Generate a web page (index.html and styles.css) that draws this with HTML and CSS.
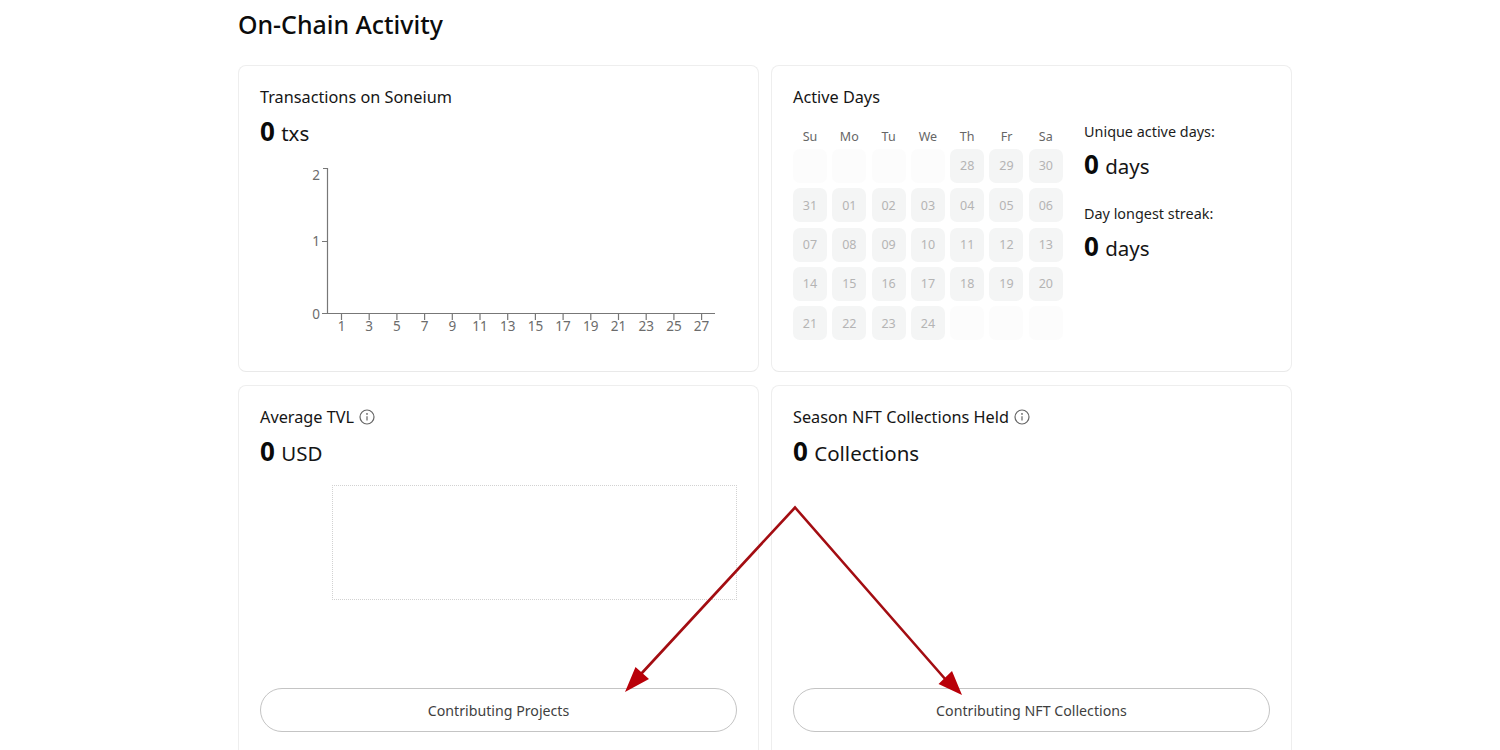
FILE: index.html
```html
<!DOCTYPE html>
<html lang="en">
<head>
<meta charset="utf-8">
<title>On-Chain Activity</title>
<link rel="stylesheet" href="styles.css">
</head>
<body>
<main class="page">
  <h1 class="heading">On-Chain Activity</h1>
  <div class="grid">
    <section class="card">
      <h2 class="card-title">Transactions on Soneium</h2>
      <p class="metric"><b>0</b> txs</p>
      <svg class="bar-chart" width="477" height="180" viewBox="260 160 477 180" aria-label="Transactions chart">
        <g class="axis">
          <path d="M323 168.5H327.5V313.5H715M322 241.5H327.5M322 313.5H327.5"/>
          <path d="M341.5 314V320M369.2 314V320M396.9 314V320M424.6 314V320M452.3 314V320M480 314V320M507.7 314V320M535.4 314V320M563.1 314V320M590.8 314V320M618.5 314V320M646.2 314V320M673.9 314V320M701.6 314V320"/>
        </g>
        <g class="y-labels">
          <text x="320" y="180">2</text>
          <text x="320" y="246">1</text>
          <text x="320" y="319">0</text>
        </g>
        <g class="x-labels">
          <text x="341.5" y="331">1</text><text x="369.2" y="331">3</text><text x="396.9" y="331">5</text><text x="424.6" y="331">7</text><text x="452.3" y="331">9</text><text x="480" y="331">11</text><text x="507.7" y="331">13</text><text x="535.4" y="331">15</text><text x="563.1" y="331">17</text><text x="590.8" y="331">19</text><text x="618.5" y="331">21</text><text x="646.2" y="331">23</text><text x="673.9" y="331">25</text><text x="701.6" y="331">27</text>
        </g>
      </svg>
    </section>

    <section class="card">
      <h2 class="card-title">Active Days</h2>
      <div class="days">
        <div class="calendar">
          <span class="dow">Su</span><span class="dow">Mo</span><span class="dow">Tu</span><span class="dow">We</span><span class="dow">Th</span><span class="dow">Fr</span><span class="dow">Sa</span>
          <span class="day blank"></span><span class="day blank"></span><span class="day blank"></span><span class="day blank"></span><span class="day">28</span><span class="day">29</span><span class="day">30</span>
          <span class="day">31</span><span class="day">01</span><span class="day">02</span><span class="day">03</span><span class="day">04</span><span class="day">05</span><span class="day">06</span>
          <span class="day">07</span><span class="day">08</span><span class="day">09</span><span class="day">10</span><span class="day">11</span><span class="day">12</span><span class="day">13</span>
          <span class="day">14</span><span class="day">15</span><span class="day">16</span><span class="day">17</span><span class="day">18</span><span class="day">19</span><span class="day">20</span>
          <span class="day">21</span><span class="day">22</span><span class="day">23</span><span class="day">24</span><span class="day blank"></span><span class="day blank"></span><span class="day blank"></span>
        </div>
        <div class="streaks">
          <div class="streak">
            <p class="streak-label">Unique active days:</p>
            <p class="metric"><b>0</b> days</p>
          </div>
          <div class="streak">
            <p class="streak-label">Day longest streak:</p>
            <p class="metric"><b>0</b> days</p>
          </div>
        </div>
      </div>
    </section>

    <section class="card card-action">
      <h2 class="card-title">Average TVL
        <svg class="info" width="16" height="16" viewBox="0 0 16 16"><circle cx="8" cy="8" r="7"/><path d="M8 7.2V11.6"/><circle class="dot" cx="8" cy="4.9" r=".9"/></svg>
      </h2>
      <p class="metric"><b>0</b> USD</p>
      <div class="empty-plot"></div>
      <button class="pill" type="button">Contributing Projects</button>
    </section>

    <section class="card card-action">
      <h2 class="card-title">Season NFT Collections Held
        <svg class="info" width="16" height="16" viewBox="0 0 16 16"><circle cx="8" cy="8" r="7"/><path d="M8 7.2V11.6"/><circle class="dot" cx="8" cy="4.9" r=".9"/></svg>
      </h2>
      <p class="metric"><b>0</b> Collections</p>
      <button class="pill" type="button">Contributing NFT Collections</button>
    </section>
  </div>
</main>
<svg class="arrows" width="1500" height="750" viewBox="0 0 1500 750" aria-hidden="true">
  <path class="arrow-line" d="M641 674L795 507.5L946 680"/>
  <path class="arrow-head" d="M625 692L635.500 667L649 679ZM962 695L938.500 684L952 671Z"/>
</svg>
</body>
</html>
```
FILE: styles.css
```css
* { box-sizing: border-box; }
html, body { margin: 0; height: 750px; overflow: hidden; background: #fff; }
body { font-family: "Noto Sans", "Open Sans", sans-serif; color: #111; }
.page { width: 1054px; margin-left: 238px; }
.heading { margin: 0; padding-top: 7px; height: 65px; font-size: 24.9px; line-height: 34px; font-weight: 500; color: #0c0c0c; }
.grid { display: grid; grid-template-columns: 521px 521px; grid-template-rows: 307px 400px; gap: 13px 12px; }
.card { border: 1px solid #eeeeee; border-bottom-color: #e9e9e9; border-radius: 8px; padding: 18.5px 21px 0; background: #fff; }
.card-action { display: flex; flex-direction: column; position: relative; }
.card-title { margin: 0; display: flex; align-items: center; gap: 5px; font-size: 16.25px; line-height: 24px; font-weight: 400; color: #151515; }
.metric { margin: 4px 0 0; font-size: 20.5px; line-height: 36px; font-weight: 400; color: #151515; white-space: nowrap; }
.metric b { font-size: 26px; font-weight: 700; color: #0a0a0a; margin-right: 1px; }
.bar-chart { display: block; margin-top: 9.5px; }
.axis path { fill: none; stroke: #777; stroke-width: 1.2; }
.y-labels text, .x-labels text { font-size: 13.5px; fill: #6c6c6c; }
.y-labels text { text-anchor: end; }
.x-labels text { text-anchor: middle; }
.days { display: flex; gap: 21px; margin-top: 12.5px; }
.calendar { display: grid; grid-template-columns: repeat(7, 34px); grid-template-rows: 15.4px; grid-auto-rows: 34px; gap: 5.3px; width: 270px; margin-top: 7.3px; }
.dow { display: flex; justify-content: center; align-items: center; font-size: 12.5px; color: #666; }
.day { display: flex; justify-content: center; align-items: center; border-radius: 7px; background: #f4f5f5; font-size: 12.5px; color: #b4b4b4; }
.day.blank { background: #fcfcfc; }
.streaks { display: flex; flex-direction: column; gap: 19px; }
.streak-label { margin: 0; font-size: 14.4px; line-height: 22px; color: #1c1c1c; white-space: nowrap; }
.streak .metric { margin-top: 3px; }
.info { flex: none; fill: none; stroke: #666; stroke-width: 1.2; }
.info .dot { fill: #666; stroke: none; }
.empty-plot { position: absolute; left: 93px; top: 99px; width: 405px; height: 115px; border: 1px dotted #d2d2d2; }
.pill { position: absolute; left: 21px; top: 302px; width: 477px; height: 44px; border: 1px solid #c4c4c4; border-radius: 22px; background: #fff; font-family: inherit; font-size: 14.2px; font-weight: 400; color: #3f3f3f; }
.arrows { position: absolute; left: 0; top: 0; pointer-events: none; }
.arrow-line { fill: none; stroke: #a30d12; stroke-width: 2.6; }
.arrow-head { fill: #b90009; }
```
